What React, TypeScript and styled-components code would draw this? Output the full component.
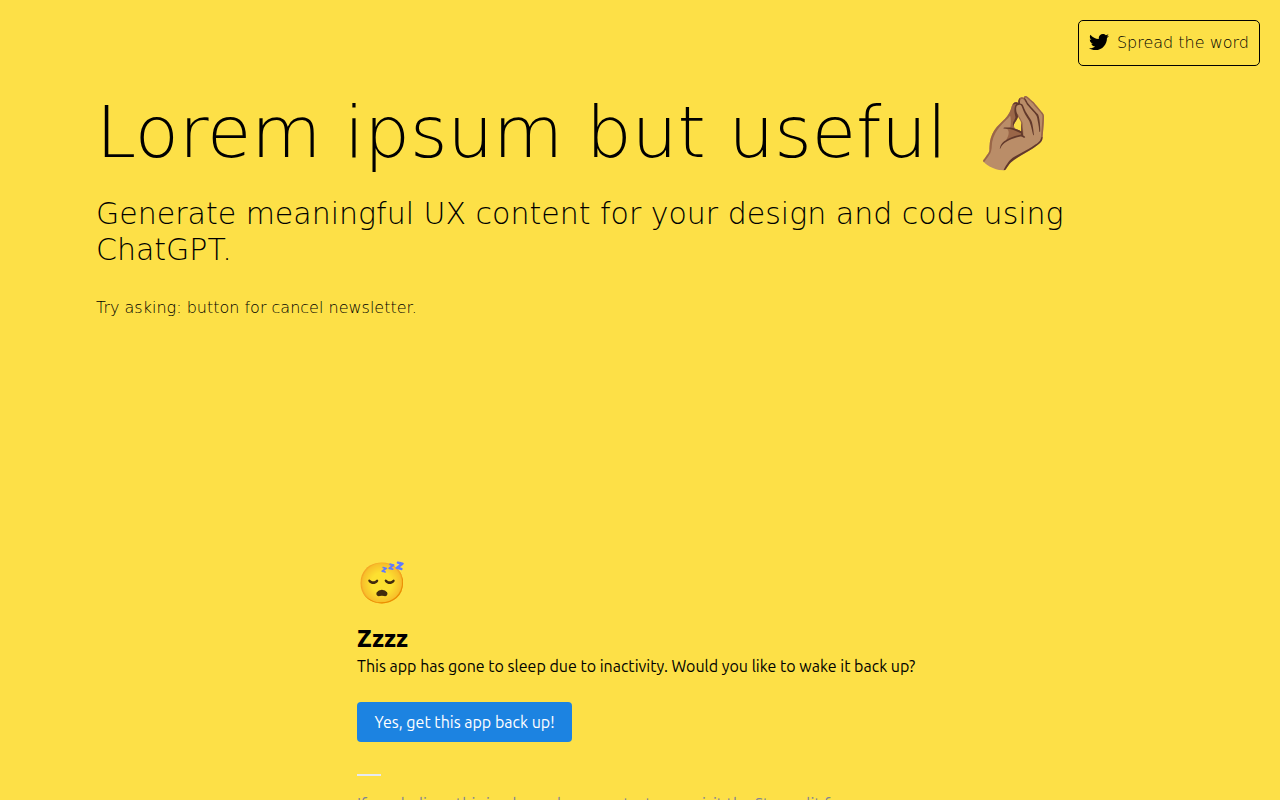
import React from "react";
import styled, { createGlobalStyle } from "styled-components";
import { FaTwitter } from "react-icons/fa";

const GlobalStyle = createGlobalStyle`
  * { box-sizing: border-box; }
  body { margin: 0; background: #fde047; color: #000; }
  h1, h2, p { margin: 0; }
`;

const Page = styled.div`
  display: flex;
  flex-direction: column;
  height: 100vh;
  overflow: hidden;
  padding: 20px 20px 0;
  background: #fde047;
  font-family: "DejaVu Sans", sans-serif;
  font-weight: 200;
  font-size: 16px;
  line-height: 24px;
`;

const TopBar = styled.header`
  display: flex;
  justify-content: flex-end;
`;

const ShareLink = styled.a`
  display: flex;
  align-items: center;
  gap: 8px;
  height: 46px;
  padding: 0 10px;
  border: 1px solid #000;
  border-radius: 5px;
  color: inherit;
  text-decoration: none;
  svg { width: 20px; height: 20px; margin-bottom: 2px; }
`;

const Hero = styled.section`
  display: flex;
  flex-direction: column;
  padding: 30px 76px 0;
`;

const Title = styled.h1`
  font-weight: 200;
  font-size: 72px;
  line-height: 72px;
`;

const Subtitle = styled.h2`
  margin-top: 28px;
  font-weight: 200;
  font-size: 30px;
  line-height: 36px;
`;

const Hint = styled.p`
  margin-top: 28px;
`;

const AppFrame = styled.main`
  width: 100%;
  max-width: 566px;
  margin: 238px auto 0;
  font-family: Ubuntu, "Noto Sans", sans-serif;
  font-weight: 400;
`;

const Sleepy = styled.div`
  font-size: 40px;
  line-height: 50px;
`;

const SleepTitle = styled.h2`
  margin-top: 16px;
  font-weight: 800;
  font-size: 24px;
  line-height: 30px;
`;

const WakeButton = styled.button`
  display: block;
  min-width: 215px;
  height: 40px;
  margin-top: 24px;
  padding: 0 16px;
  border: 0;
  border-radius: 4px;
  background: #1c83e1;
  color: #fff;
  font: inherit;
`;

const Rule = styled.hr`
  width: 24px;
  height: 2px;
  margin: 32px 0 16px;
  border: 0;
  background: #e6eaf1;
`;

const Support = styled.p`
  color: #808495;
`;

export default function App() {
  return (
    <Page>
      <GlobalStyle />
      <TopBar>
        <ShareLink href="#share">
          <FaTwitter aria-hidden />
          Spread the word
        </ShareLink>
      </TopBar>
      <Hero>
        <Title>Lorem ipsum but useful 🤌🏽</Title>
        <Subtitle>Generate meaningful UX content for your design and code using ChatGPT.</Subtitle>
        <Hint>Try asking: button for cancel newsletter.</Hint>
      </Hero>
      <AppFrame>
        <Sleepy>😴</Sleepy>
        <SleepTitle>Zzzz</SleepTitle>
        <p>This app has gone to sleep due to inactivity. Would you like to wake it back up?</p>
        <WakeButton type="button">Yes, get this app back up!</WakeButton>
        <Rule />
        <Support>If you believe this is a bug, please contact us or visit the Streamlit forums.</Support>
      </AppFrame>
    </Page>
  );
}
